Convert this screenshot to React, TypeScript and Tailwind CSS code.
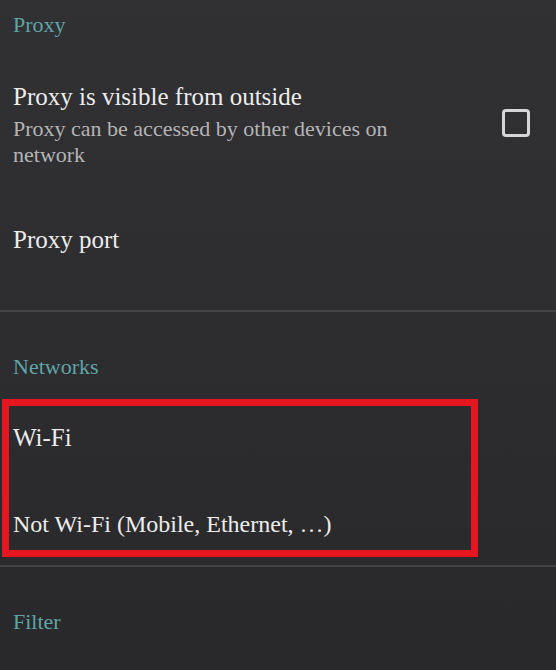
import React from 'react';

const serif = { fontFamily: '"Liberation Serif", "DejaVu Serif", serif' };

function SectionHeader({ label, className = '' }: { label: string; className?: string }) {
  return (
    <div className={`pl-[13px] text-[22px] leading-[26px] text-[#5fa4a6] ${className}`}>{label}</div>
  );
}

function Divider({ className = '' }: { className?: string }) {
  return <div className={`h-[2px] w-full bg-[#444447] ${className}`} />;
}

export default function App() {
  return (
    <div
      className="h-[670px] w-[556px] overflow-hidden bg-linear-to-b from-[#313033] to-[#29292b] text-[#ececec]"
      style={serif}
    >
      {/* Proxy */}
      <SectionHeader label="Proxy" className="pt-[12px]" />

      <div className="mt-[45px] flex items-center justify-between pl-[13px] pr-[26px]">
        <div className="w-[420px]">
          <div className="text-[25px] leading-[28px]">Proxy is visible from outside</div>
          <div className="mt-[5px] text-[22px] leading-[26px] text-[#b4b4b6]">
            Proxy can be accessed by other devices on network
          </div>
        </div>
        <div className="mb-[6px] h-[28px] w-[28px] rounded-[4px] border-[3px] border-[#d6d6d8]" />
      </div>

      <div className="mt-[58px] pl-[13px] text-[25px] leading-[28px]">Proxy port</div>

      <Divider className="mt-[56px]" />

      {/* Networks */}
      <SectionHeader label="Networks" className="mt-[42px]" />

      <div className="ml-[2px] mt-[19px] w-[476px] border-[7px] border-[#e5161f] pb-[12px] pl-[4px] pt-[18px]">
        <div className="text-[25px] leading-[28px]">Wi-Fi</div>
        <div className="mt-[58px] text-[24px] leading-[28px]">Not Wi-Fi (Mobile, Ethernet, …)</div>
      </div>

      <Divider className="mt-[8px]" />

      {/* Filter */}
      <SectionHeader label="Filter" className="mt-[42px]" />
    </div>
  );
}
